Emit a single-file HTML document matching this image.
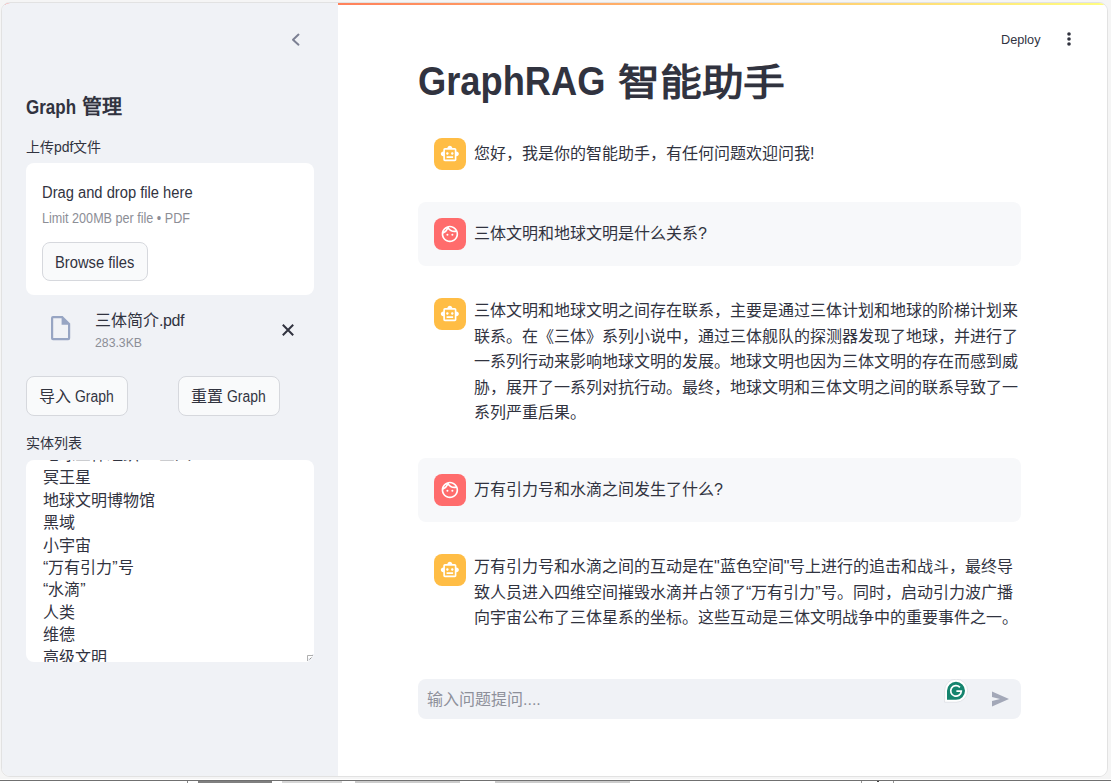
<!DOCTYPE html>
<html lang="zh-CN"><head><meta charset="utf-8">
<style>
*{box-sizing:border-box;margin:0;padding:0}
html,body{width:1111px;height:783px;overflow:hidden;background:#f5f5f5;font-family:"Liberation Sans",sans-serif;color:#31333f}
.abs{position:absolute}
.t{position:absolute;white-space:nowrap;line-height:1;transform-origin:0 0}
#win{position:absolute;left:1px;top:2px;width:1107px;height:775px;border:1px solid #e2e2e2;border-radius:9px;overflow:hidden;background:#fff}
#side{position:absolute;z-index:1;left:0;top:0;width:336px;height:100%;background:#f0f2f6}
#main{position:absolute;left:336px;top:0;right:0;bottom:0;background:linear-gradient(#fff,#fff) 0 2px/100% 100% no-repeat}
#grad{position:absolute;left:0;top:0;right:0;height:2px;z-index:0;background:linear-gradient(90deg,#ff4b4b,#fffd80)}
.btn{position:absolute;border:1px solid #d6d8dd;border-radius:8px;background:#f9fafb}
.av{position:absolute;width:32px;height:32px;border-radius:8px}
.bot{background:#ffbd45}
.usr{background:#ff6c6c}
.msg{font-size:16px;color:#31333f}
.para{position:absolute;font-size:16px;line-height:25.6px;white-space:nowrap;color:#31333f}
.ubox{position:absolute;left:80px;width:603px;height:64px;background:#f7f8fa;border-radius:8px}
</style></head><body>
<div class="abs" style="left:0;top:779px;width:1111px;height:4px;background:#fff"></div>
<div class="abs" style="left:0;top:780px;width:1111px;height:1px;background:#707070"></div>
<div class="abs" style="left:187px;top:781px;width:1px;height:2px;background:#888"></div>
<div class="abs" style="left:198px;top:781px;width:74px;height:2px;background:#555;opacity:.75"></div>
<div class="abs" style="left:282px;top:781px;width:60px;height:2px;background:#bbb;opacity:.6"></div>
<div class="abs" style="left:355px;top:781px;width:105px;height:2px;background:#aaa;opacity:.6"></div>
<div class="abs" style="left:495px;top:781px;width:135px;height:2px;background:#aaa;opacity:.6"></div>
<div class="abs" style="left:861px;top:781px;width:1px;height:2px;background:#999"></div>
<div class="abs" style="left:877px;top:781px;width:2px;height:1px;background:#444"></div>
<div class="abs" style="left:893px;top:781px;width:1px;height:2px;background:#999"></div>
<div id="win">
 <div id="grad"></div>
 <div id="side">
  <svg class="abs" style="left:288px;top:28px" width="12" height="18" viewBox="0 0 12 18"><path d="M8.5 3.6 L3 8.8 L8.5 13.7" fill="none" stroke="#7c8093" stroke-width="2" stroke-linecap="round" stroke-linejoin="round"/></svg>
  <div class="t" style="left:24px;top:94px;font-size:20px;font-weight:bold"><span style="display:inline-block;transform:scaleX(.85);transform-origin:0 0;margin-right:-8.8px">Graph</span> 管理</div>
  <div class="t" style="left:24px;top:137px;font-size:14px">上传pdf文件</div>
  <div class="abs" style="left:24px;top:160px;width:288px;height:132px;background:#fff;border-radius:8px"></div>
  <div class="t" style="left:39.5px;top:182px;font-size:16px;transform:scaleX(.92)">Drag and drop file here</div>
  <div class="t" style="left:39.5px;top:208px;font-size:14px;color:#8c8e96;transform:scaleX(.90)">Limit 200MB per file • PDF</div>
  <div class="btn" style="left:40px;top:239px;width:106px;height:39px"></div>
  <div class="t" style="left:52.5px;top:252px;font-size:16px;transform:scaleX(.92)">Browse files</div>
  <svg class="abs" style="left:48.9px;top:313px" width="20" height="25" viewBox="0 0 20 25"><path fill-rule="evenodd" fill="#97a5c3" d="M2 0 H11.6 L19.2 7.6 V22.3 Q19.2 24.3 17.2 24.3 H2 Q0 24.3 0 22.3 V2 Q0 0 2 0 Z M2.2 2.2 V22.1 H17 V8.8 H10.6 V2.2 Z"/></svg>
  <div class="t" style="left:93px;top:310px;font-size:16px">三体简介<span style="letter-spacing:-0.4px">.pdf</span></div>
  <div class="t" style="left:93px;top:333.5px;font-size:12.5px;color:#8c8e96;transform:scaleX(.98)">283.3KB</div>
  <svg class="abs" style="left:277px;top:318px" width="18" height="18" viewBox="0 0 18 18"><path d="M3.8 3.8 L14.2 14.2 M14.2 3.8 L3.8 14.2" stroke="#31333f" stroke-width="2"/></svg>
  <div class="btn" style="left:24px;top:373px;width:102px;height:40px"></div>
  <div class="t" style="left:36.5px;top:386px;font-size:16px">导入 <span style="display:inline-block;transform:scaleX(.87);transform-origin:0 0">Graph</span></div>
  <div class="btn" style="left:176px;top:373px;width:102px;height:40px"></div>
  <div class="t" style="left:188.5px;top:386px;font-size:16px">重置 <span style="display:inline-block;transform:scaleX(.87);transform-origin:0 0">Graph</span></div>
  <div class="t" style="left:24px;top:433px;font-size:14px">实体列表</div>
  <div class="abs" style="left:24px;top:457px;width:288px;height:202px;background:#fff;border-radius:8px;overflow:hidden">
   <div class="abs" style="left:17px;top:-16px;font-size:16px;line-height:22.4px;white-space:nowrap;color:#31333f">地球三体组织 —三人</div>
   <div class="abs" style="left:17px;top:7.4px;font-size:16px;line-height:22.4px;white-space:nowrap;color:#31333f">冥王星<br>地球文明博物馆<br>黑域<br>小宇宙<br>“万有引力”号<br>“水滴”<br>人类<br>维德<br>高级文明</div>
   <div class="abs" style="left:282px;top:198px;width:6px;height:4px;background:#f0f2f6"></div><div class="abs" style="left:286px;top:194px;width:2px;height:8px;background:#f0f2f6"></div><svg class="abs" style="left:281px;top:195px" width="7" height="7" viewBox="0 0 7 7"><path d="M0.5 6 V0.5 H6" fill="none" stroke="#9a9a9a" stroke-width="0.8"/><path d="M2.5 4.5 L4.5 2.5" stroke="#777" stroke-width="0.8"/></svg>
  </div>
 </div>
 <div id="main">
  <div class="t" style="left:663px;top:29.5px;font-size:13.5px;transform:scaleX(.94)">Deploy</div>
  <svg class="abs" style="left:727px;top:27px" width="8" height="20" viewBox="0 0 8 20"><circle cx="4" cy="4" r="1.8" fill="#31333f"/><circle cx="4" cy="9" r="1.8" fill="#31333f"/><circle cx="4" cy="14" r="1.8" fill="#31333f"/></svg>
  <div class="t" style="left:80px;top:58px;font-size:41px;font-weight:bold;transform:scaleX(.885)">GraphRAG</div>
  <div class="t" style="left:280px;top:61.5px;font-size:41px;font-weight:bold;transform:scale(1.02,.91)">智能助手</div>

  <div class="av bot" style="left:96px;top:135px"><svg class="abs" style="left:6px;top:6.3px" width="19.7" height="19.7" viewBox="0 0 24 24"><path fill="#fff" d="M20 9V7c0-1.1-.9-2-2-2h-3c0-1.66-1.34-3-3-3S9 3.34 9 5H6c-1.1 0-2 .9-2 2v2c-1.66 0-3 1.34-3 3s1.34 3 3 3v4c0 1.1.9 2 2 2h12c1.1 0 2-.9 2-2v-4c1.66 0 3-1.34 3-3s-1.34-3-3-3zm-2 10H6V7h12v12zm-9-6c-.83 0-1.5-.67-1.5-1.5S8.17 10 9 10s1.5.67 1.5 1.5S9.830 13 9 13zm7.5-1.5c0 .83-.67 1.5-1.5 1.5s-1.5-.67-1.5-1.5.67-1.5 1.5-1.5 1.5.67 1.5 1.5zM8 15h8v2H8v-2z"/></svg></div>
  <div class="t msg" style="left:136px;top:143px">您好，我是你的智能助手，有任何问题欢迎问我!</div>

  <div class="ubox" style="top:199px"></div>
  <div class="av usr" style="left:96px;top:215px"><svg class="abs" style="left:6px;top:6.2px" width="19.8" height="19.8" viewBox="0 0 24 24"><path fill="#fff" d="M10.25 13a1.25 1.25 0 1 1-2.5 0 1.25 1.25 0 0 1 2.5 0zM15 11.75a1.25 1.25 0 1 0 0 2.5 1.25 1.25 0 0 0 0-2.5zm7 .25c0 5.52-4.48 10-10 10S2 17.52 2 12 6.48 2 12 2s10 4.48 10 10zM10.66 4.12C12.060 6.44 14.6 8 17.5 8c.46 0 .91-.05 1.34-.12C17.44 5.56 14.9 4 12 4c-.46 0-.91.05-1.34.12zM4.42 9.47a8.046 8.046 0 0 0 3.66-4.44 8.046 8.046 0 0 0-3.660 4.44zM20 12c0-.78-.12-1.53-.33-2.24-.7.15-1.42.24-2.17.24a10 10 0 0 1-7.76-3.7A10.02 10.02 0 0 1 4 11.860c.01.04 0 .09 0 .14 0 4.41 3.59 8 8 8s8-3.59 8-8z"/></svg></div>
  <div class="t msg" style="left:136px;top:223px">三体文明和地球文明是什么关系?</div>

  <div class="av bot" style="left:96px;top:295px"><svg class="abs" style="left:6px;top:6.3px" width="19.7" height="19.7" viewBox="0 0 24 24"><path fill="#fff" d="M20 9V7c0-1.1-.9-2-2-2h-3c0-1.66-1.34-3-3-3S9 3.34 9 5H6c-1.1 0-2 .9-2 2v2c-1.66 0-3 1.34-3 3s1.34 3 3 3v4c0 1.1.9 2 2 2h12c1.1 0 2-.9 2-2v-4c1.66 0 3-1.34 3-3s-1.34-3-3-3zm-2 10H6V7h12v12zm-9-6c-.83 0-1.5-.67-1.5-1.5S8.17 10 9 10s1.5.67 1.5 1.5S9.830 13 9 13zm7.5-1.5c0 .83-.67 1.5-1.5 1.5s-1.5-.67-1.5-1.5.67-1.5 1.5-1.5 1.5.67 1.5 1.5zM8 15h8v2H8v-2z"/></svg></div>
  <div class="para" style="left:136px;top:295px">三体文明和地球文明之间存在联系，主要是通过三体计划和地球的阶梯计划来<br>联系。在《三体》系列小说中，通过三体舰队的探测器发现了地球，并进行了<br>一系列行动来影响地球文明的发展。地球文明也因为三体文明的存在而感到威<br>胁，展开了一系列对抗行动。最终，地球文明和三体文明之间的联系导致了一<br>系列严重后果。</div>

  <div class="ubox" style="top:455px"></div>
  <div class="av usr" style="left:96px;top:471px"><svg class="abs" style="left:6px;top:6.2px" width="19.8" height="19.8" viewBox="0 0 24 24"><path fill="#fff" d="M10.25 13a1.25 1.25 0 1 1-2.5 0 1.25 1.25 0 0 1 2.5 0zM15 11.75a1.25 1.25 0 1 0 0 2.5 1.25 1.25 0 0 0 0-2.5zm7 .25c0 5.52-4.48 10-10 10S2 17.52 2 12 6.48 2 12 2s10 4.48 10 10zM10.66 4.12C12.060 6.44 14.6 8 17.5 8c.46 0 .91-.05 1.34-.12C17.44 5.56 14.9 4 12 4c-.46 0-.91.05-1.34.12zM4.42 9.47a8.046 8.046 0 0 0 3.66-4.44 8.046 8.046 0 0 0-3.660 4.44zM20 12c0-.78-.12-1.53-.33-2.24-.7.15-1.42.24-2.17.24a10 10 0 0 1-7.76-3.7A10.02 10.02 0 0 1 4 11.860c.01.04 0 .09 0 .14 0 4.41 3.59 8 8 8s8-3.59 8-8z"/></svg></div>
  <div class="t msg" style="left:136px;top:479px">万有引力号和水滴之间发生了什么?</div>

  <div class="av bot" style="left:96px;top:551px"><svg class="abs" style="left:6px;top:6.3px" width="19.7" height="19.7" viewBox="0 0 24 24"><path fill="#fff" d="M20 9V7c0-1.1-.9-2-2-2h-3c0-1.66-1.34-3-3-3S9 3.34 9 5H6c-1.1 0-2 .9-2 2v2c-1.66 0-3 1.34-3 3s1.34 3 3 3v4c0 1.1.9 2 2 2h12c1.1 0 2-.9 2-2v-4c1.66 0 3-1.34 3-3s-1.34-3-3-3zm-2 10H6V7h12v12zm-9-6c-.83 0-1.5-.67-1.5-1.5S8.17 10 9 10s1.5.67 1.5 1.5S9.830 13 9 13zm7.5-1.5c0 .83-.67 1.5-1.5 1.5s-1.5-.67-1.5-1.5.67-1.5 1.5-1.5 1.5.67 1.5 1.5zM8 15h8v2H8v-2z"/></svg></div>
  <div class="para" style="left:136px;top:551px">万有引力号和水滴之间的互动是在"蓝色空间"号上进行的追击和战斗，最终导<br>致人员进入四维空间摧毁水滴并占领了“万有引力”号。同时，启动引力波广播<br>向宇宙公布了三体星系的坐标。这些互动是三体文明战争中的重要事件之一。</div>

  <div class="abs" style="left:80px;top:676px;width:603px;height:40px;background:#f0f2f6;border-radius:8px"></div>
  <div class="t" style="left:89px;top:689px;font-size:16px;color:#8e909a">输入问题提问....</div>
  <svg class="abs" style="left:606px;top:676px" width="24" height="24" viewBox="0 0 24 24"><path d="M0.6 23.2 V11.7 A11.5 11.5 0 1 1 12.1 23.2 Z" fill="#fff" stroke="#d5d7de" stroke-width="0.6"/><path d="M3 20.8 V11.8 A9 9 0 1 1 12 20.8 Z" fill="#15846e"/><path d="M15.9 8.3 A5.3 5.3 0 1 0 17.3 12.2 H12.4" fill="none" stroke="#fff" stroke-width="1.7"/></svg>
  <svg class="abs" style="left:652px;top:687px" width="20" height="18" viewBox="0 0 20 18"><path d="M2 1.5 L19 9 L2 16.5 L2 11 L10 9 L2 7 Z" fill="#a3a8b8"/></svg>
 </div>
</div>
</body></html>
